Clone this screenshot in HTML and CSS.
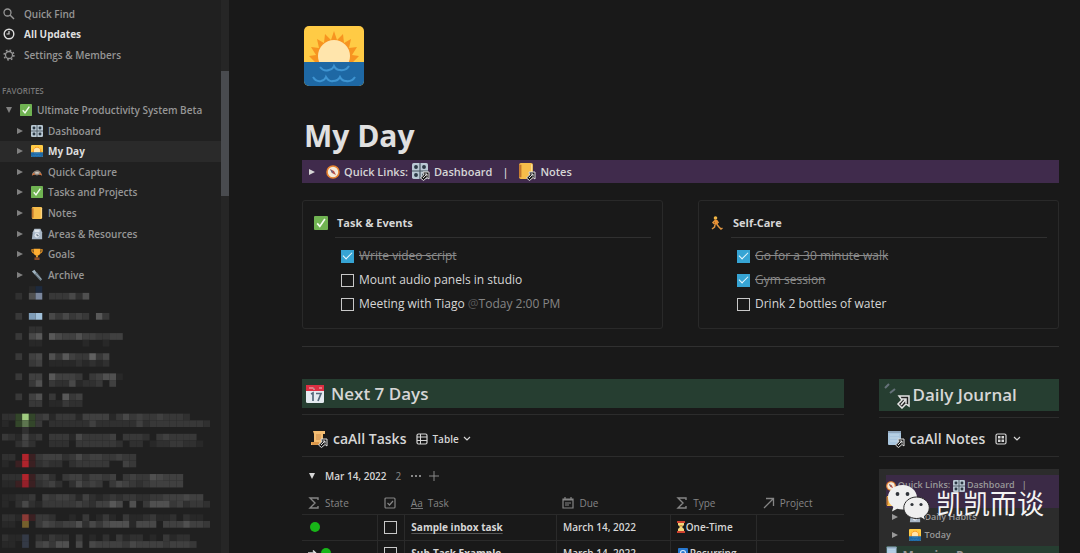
FILE: index.html
```
<!DOCTYPE html>
<html lang="en">
<head>
<meta charset="utf-8">
<title>My Day</title>
<link rel="stylesheet" href="styles.css">
</head>
<body>
<svg class="defs" aria-hidden="true">
  <symbol id="tri" viewBox="0 0 8 8"><path d="M1 1l6 3-6 3z" fill="currentColor"/></symbol>
  <symbol id="tri-down" viewBox="0 0 8 8"><path d="M1 1h6L4 7z" fill="currentColor"/></symbol>
  <symbol id="check" viewBox="0 0 14 14"><rect width="14" height="14" rx="1" fill="#70b352"/><path d="M3.2 7.4l2.6 3L10.900 3" fill="none" stroke="#f4fbef" stroke-width="1.700"/></symbol>
  <symbol id="knobs" viewBox="0 0 14 14"><rect width="14" height="14" rx="1.500" fill="#b9c8d3"/><path d="M7 0v14M0 7h14" stroke="#46545f" stroke-width="1"/><g fill="#2c3a45"><circle cx="3.500" cy="3.500" r="1.700"/><circle cx="10.500" cy="3.500" r="1.700"/><circle cx="3.500" cy="10.500" r="1.700"/><circle cx="10.500" cy="10.500" r="1.700"/></g></symbol>
  <symbol id="sun" viewBox="0 0 60 60"><rect width="60" height="60" rx="5" fill="#ffcb45"/><path d="M12 37L5 30l7-1-5-8 8 1-2-9 7 4 1-9 6 6 3-9 3 9 6-6 1 9 7-4-2 9 8-1-5 8 7 1-7 7z" fill="#f79420"/><circle cx="30" cy="30" r="16" fill="#ffe5ac"/><path d="M0 36h60v19a5 5 0 0 1-5 5H5a5 5 0 0 1-5-5z" fill="#1e68a4"/><path d="M16 41q4 5 9 3 4-1 5-4 2 4 6 4 6 1 9-4M9 51q3 5 8 4 4-1 5-4 3 5 7 4 5 0 7-4 2 4 6 4 6 1 9-4" fill="none" stroke="#3e94d1" stroke-width="2"/></symbol>
  <symbol id="capture" viewBox="0 0 14 14"><path d="M1 11c0-3 2-5 6-6 3 0 5 2 6 6l-3-1-3 1-3-1z" fill="#8f857c"/><path d="M1 11l2-3 2 2zM9 10l2-2 2 3z" fill="#d06a31"/><path d="M5 7h4v2H5z" fill="#cfc8bd"/></symbol>
  <symbol id="book" viewBox="0 0 14 14"><rect x="1" width="12" height="14" rx="1.500" fill="#f7bd4a"/><path d="M1 1.500h2v11H1z" fill="#c4772d"/><path d="M12 1v12" stroke="#fbe1a0"/></symbol>
  <symbol id="cabinet" viewBox="0 0 14 14"><path d="M2 5l2-4h7l2 4v8H1z" fill="#a9b7c6"/><path d="M4 2h6v3H4z" fill="#e0e5ea"/><circle cx="7" cy="8.500" r="2.800" fill="#dfe5ec"/><path d="M7 7v2h2" fill="none" stroke="#536373"/></symbol>
  <symbol id="trophy" viewBox="0 0 14 14"><path d="M3 1h8v5q-1 3-4 3T3 6zM6 8h2v3H6z" fill="#ffae32"/><path d="M3 2H1q0 4 3 4M11 2h2q0 4-3 4" fill="none" stroke="#f59b23" stroke-width="1.300"/><path d="M4 11h6v3H4z" fill="#8c4c2a"/></symbol>
  <symbol id="torch" viewBox="0 0 14 14"><path d="M1 3l3-2 3 4-2 2z" fill="#9fb2bf"/><path d="M4 6l3-2 6 8-2 2z" fill="#6d7e8a"/><path d="M6 6l6 6" stroke="#9eabb5"/></symbol>
  <symbol id="compass" viewBox="0 0 14 14"><circle cx="7" cy="7" r="6" fill="#f4ead9" stroke="#e8832f" stroke-width="1.600"/><path d="M4 4l4 2 2 4-4-2z" fill="#b54d45"/><path d="M4 4l2 4 1-1z" fill="#536e96"/></symbol>
  <symbol id="link" viewBox="0 0 10 10"><path d="M3 1h6v7L7 6.500 3.500 9.500.5 7l3-3z" fill="#1a1a1a" stroke="#ddd"/><path d="M3 7l4-4M4.500 3H7v2.500" fill="none" stroke="#ddd"/></symbol>
  <symbol id="scroll" viewBox="0 0 16 16"><path d="M3 1h12v3h-2v8q0 3-3 3H1v-3h3V4z" fill="#f3bd72"/><path d="M1 12h8v3H2z" fill="#dd9a4c"/><path d="M6 5h5M6 7h5M6 9h5" stroke="#c98a4c"/></symbol>
  <symbol id="pages" viewBox="0 0 16 16"><rect x="1" y="1" width="13" height="14" rx="1" fill="#a9c6df"/><path d="M1 2h13" stroke="#8fa5bb" stroke-width="2"/><path d="M3 5h9M3 8h9M3 11h9" stroke="#c3d8e8"/></symbol>
  <symbol id="sigma" viewBox="0 0 12 12"><path d="M10 3V1H2l5 5-5 5h8V9" fill="none" stroke="currentColor" stroke-width="1.400"/></symbol>
  <symbol id="box" viewBox="0 0 12 12"><rect x="1" y="1" width="10" height="10" rx="1" fill="none" stroke="currentColor" stroke-width="1.200"/><path d="M3.500 6l2 2 3.500-4" fill="none" stroke="currentColor" stroke-width="1.200"/></symbol>
  <symbol id="date" viewBox="0 0 12 12"><path d="M1 2h10v9H1zM1 3h10M3 0v2M9 0v2M3 6h6M3 8h4" fill="none" stroke="currentColor" stroke-width="1.200"/></symbol>
  <symbol id="arrow" viewBox="0 0 12 12"><path d="M1 11L10 2M3 1.500h7.500V9" fill="none" stroke="currentColor" stroke-width="1.300"/></symbol>
  <symbol id="chev" viewBox="0 0 8 8"><path d="M1 2l3 3 3-3" fill="none" stroke="currentColor" stroke-width="1.200"/></symbol>
  <symbol id="grid" viewBox="0 0 12 12"><rect x="1" y="1" width="10" height="10" rx="1.500" fill="none" stroke="currentColor" stroke-width="1.200"/><path d="M3 3h2.500v2.500H3zM6.500 3H9v2.500H6.500zM3 6.500h2.500V9H3zM6.500 6.500H9V9H6.500z" fill="currentColor"/></symbol>
</svg>

<div class="app">
  <aside class="sidebar">
    <div class="side-main">
      <nav class="top-nav">
        <a href="#" class="side-link"><svg class="i12" viewBox="0 0 12 12"><circle cx="4.500" cy="4.500" r="3.500" fill="none" stroke="currentColor" stroke-width="1.300"/><path d="M7 7l4 4" stroke="currentColor" stroke-width="1.500"/></svg>Quick Find</a>
        <a href="#" class="side-link bright"><svg class="i12" viewBox="0 0 12 12"><circle cx="6" cy="6" r="4.800" fill="none" stroke="currentColor" stroke-width="1.400"/><path d="M6 3v3H3.500" fill="none" stroke="currentColor" stroke-width="1.200"/></svg>All Updates</a>
        <a href="#" class="side-link"><svg class="i12" viewBox="0 0 12 12"><circle cx="6" cy="6" r="3.500" fill="none" stroke="currentColor" stroke-width="1.300"/><circle cx="6" cy="6" r="4.900" fill="none" stroke="currentColor" stroke-width="1.500" stroke-dasharray="1.700 2.150"/></svg>Settings &amp; Members</a>
      </nav>
      <h2 class="label">FAVORITES</h2>
      <nav class="tree">
        <a href="#" class="node root"><svg class="i8"><use href="#tri-down"/></svg><svg class="i12"><use href="#check"/></svg>Ultimate Productivity System Beta</a>
        <a href="#" class="node"><svg class="i8"><use href="#tri"/></svg><svg class="i12"><use href="#knobs"/></svg>Dashboard</a>
        <a href="#" class="node active"><svg class="i8"><use href="#tri"/></svg><svg class="i12"><use href="#sun"/></svg>My Day</a>
        <a href="#" class="node"><svg class="i8"><use href="#tri"/></svg><svg class="i12"><use href="#capture"/></svg>Quick Capture</a>
        <a href="#" class="node"><svg class="i8"><use href="#tri"/></svg><svg class="i12"><use href="#check"/></svg>Tasks and Projects</a>
        <a href="#" class="node"><svg class="i8"><use href="#tri"/></svg><svg class="i12"><use href="#book"/></svg>Notes</a>
        <a href="#" class="node"><svg class="i8"><use href="#tri"/></svg><svg class="i12"><use href="#cabinet"/></svg>Areas &amp; Resources</a>
        <a href="#" class="node"><svg class="i8"><use href="#tri"/></svg><svg class="i12"><use href="#trophy"/></svg>Goals</a>
        <a href="#" class="node"><svg class="i8"><use href="#tri"/></svg><svg class="i12"><use href="#torch"/></svg>Archive</a>
      </nav>
      <svg class="mosaic" id="mosaic" viewBox="0 0 31 39" aria-hidden="true"></svg>
    </div>
    <div class="track"><div class="thumb"></div></div>
  </aside>

  <main class="main">
    <svg class="cover-icon"><use href="#sun"/></svg>
    <h1 class="title">My Day</h1>
    <div class="quick">
      <svg class="i8"><use href="#tri"/></svg>
      <svg class="i14 lead"><use href="#compass"/></svg>
      <span>Quick Links:</span>
      <span class="linked"><svg class="i16"><use href="#knobs"/></svg><svg class="badge"><use href="#link"/></svg></span>
      <a href="#">Dashboard</a><span class="bar">|</span>
      <span class="linked"><svg class="i16"><use href="#book"/></svg><svg class="badge"><use href="#link"/></svg></span>
      <a href="#">Notes</a>
    </div>

    <div class="cards">
      <section class="card">
        <svg class="i14"><use href="#check"/></svg>
        <div class="card-body">
          <h2 class="card-title">Task &amp; Events</h2>
          <label class="todo done"><input type="checkbox" class="tick" checked><span>Write video script</span></label>
          <label class="todo"><input type="checkbox" class="tick"><span>Mount audio panels in studio</span></label>
          <label class="todo"><input type="checkbox" class="tick"><span>Meeting with Tiago <span class="mention"><span class="at">@</span>Today 2:00 PM</span></span></label>
        </div>
      </section>
      <section class="card">
        <svg class="i14" viewBox="0 0 14 14"><circle cx="5.500" cy="2" r="1.800" fill="#f0b545"/><path d="M4.500 3.500l3 .5.5 4.500-3.500.5z" fill="#ef8f2e"/><path d="M5 4.500L3 6.500l1.500 1.500M7 5l1.500 2M5 9l-.5 2-2.500 2M7 8.500l1.500 2L11 13l1.500-1" fill="none" stroke="#e09642" stroke-width="1.500"/></svg>
        <div class="card-body">
          <h2 class="card-title">Self-Care</h2>
          <label class="todo done"><input type="checkbox" class="tick" checked><span>Go for a 30 minute walk</span></label>
          <label class="todo done"><input type="checkbox" class="tick" checked><span>Gym session</span></label>
          <label class="todo"><input type="checkbox" class="tick"><span>Drink 2 bottles of water</span></label>
        </div>
      </section>
    </div>
    <hr class="rule">

    <div class="lower">
      <section class="tasks">
        <h2 class="banner"><svg class="i20" viewBox="0 0 20 20"><rect x="1" y="1" width="18" height="18" rx="1.500" fill="#e5ebf0"/><path d="M1 1h18v6H1z" fill="#dc2f42"/><path d="M4 4h1M6 3v2M8 3v2h2M14 4h3" stroke="#f5c0c4"/><path d="M6 10l2-1v8M11 9.500h5L13 17" fill="none" stroke="#55697b" stroke-width="1.700"/></svg>Next 7 Days</h2>
        <div class="view-head">
          <span class="linked"><svg class="i16"><use href="#scroll"/></svg><svg class="badge"><use href="#link"/></svg></span>
          <h3 class="view-title">caAll Tasks</h3>
          <button type="button" class="view-btn"><svg class="i12" viewBox="0 0 12 12"><rect x="1" y="1" width="10" height="10" rx="1.500" fill="none" stroke="currentColor" stroke-width="1.200"/><path d="M1 4h10M1 7.500h10M4.500 1v10" stroke="currentColor"/></svg>Table<svg class="i8"><use href="#chev"/></svg></button>
        </div>
        <div class="group"><svg class="i8"><use href="#tri-down"/></svg><span class="group-name">Mar 14, 2022</span><span>2</span><button type="button" class="mini" aria-label="More"><svg class="i12" viewBox="0 0 12 12"><path d="M1 6h2M5 6h2M9 6h2" stroke="currentColor" stroke-width="2"/></svg></button><button type="button" class="mini" aria-label="Add"><svg class="i12" viewBox="0 0 12 12"><path d="M6 1v10M1 6h10" stroke="currentColor"/></svg></button></div>
        <table class="table">
          <colgroup><col class="c-state"><col class="c-check"><col class="c-task"><col class="c-due"><col class="c-type"><col class="c-project"></colgroup>
          <thead><tr>
            <th><div class="cell"><svg class="i12"><use href="#sigma"/></svg>State</div></th>
            <th><div class="cell"><svg class="i12"><use href="#box"/></svg></div></th>
            <th><div class="cell"><span class="aa">Aa</span>Task</div></th>
            <th><div class="cell"><svg class="i12"><use href="#date"/></svg>Due</div></th>
            <th><div class="cell"><svg class="i12"><use href="#sigma"/></svg>Type</div></th>
            <th><div class="cell"><svg class="i12"><use href="#arrow"/></svg>Project</div></th>
          </tr></thead>
          <tbody>
            <tr>
              <td><div class="cell"><span class="dot"></span></div></td>
              <td><div class="cell"><input type="checkbox" class="tick" aria-label="Sample inbox task"></div></td>
              <td><a href="#" class="task">Sample inbox task</a></td>
              <td>March 14, 2022</td>
              <td><div class="cell tight"><svg class="glass" viewBox="0 0 8 12"><path d="M1 1h6v3L5 6l2 2v3H1V8l2-2-2-2z" fill="#f2d67c"/><path d="M0 1h8M0 11h8" stroke="#cf4230" stroke-width="2"/><path d="M2 4h4L4 6z" fill="#d89642"/></svg>One-Time</div></td>
              <td></td>
            </tr>
            <tr>
              <td><div class="cell tight"><svg class="i10" viewBox="0 0 12 12"><path d="M0 6h9M6 3l3 3-3 3" fill="none" stroke="#ddd" stroke-width="2"/></svg><span class="dot"></span></div></td>
              <td><div class="cell"><input type="checkbox" class="tick" aria-label="Sub-Task Example"></div></td>
              <td><a href="#" class="task">Sub-Task Example</a></td>
              <td>March 14, 2022</td>
              <td><div class="cell tight"><svg class="i12" viewBox="0 0 12 12"><rect x="1" y="1" width="10" height="10" rx="1" fill="#2878d0"/><path d="M3.500 8V6a2.500 2.500 0 0 1 5 0M8.500 8H5" fill="none" stroke="#d6e9fb" stroke-width="1.200"/></svg>Recurring</div></td>
              <td></td>
            </tr>
          </tbody>
        </table>
      </section>

      <section class="journal">
        <h2 class="banner tall"><svg class="journal-icon" viewBox="0 0 28 28"><path d="M3 7l4-4M8 12l5-4" stroke="#66727a" stroke-width="2"/><path d="M17 15h10v10l-3-2-4 4-4-4 4-4z" fill="#222" stroke="#e4e4e4" stroke-width="1.500"/><path d="M19 24l5-6M20 18h4v4" fill="none" stroke="#e4e4e4" stroke-width="1.500"/></svg>Daily Journal</h2>
        <div class="view-head">
          <span class="linked"><svg class="i16"><use href="#pages"/></svg><svg class="badge"><use href="#link"/></svg></span>
          <h3 class="view-title">caAll Notes</h3>
          <button type="button" class="view-btn" aria-label="Gallery view"><svg class="i12"><use href="#grid"/></svg><svg class="i8"><use href="#chev"/></svg></button>
        </div>
        <article class="preview">
          <p class="preview-links"><svg class="i10"><use href="#compass"/></svg> Quick Links: <svg class="i12"><use href="#knobs"/></svg> Dashboard &nbsp; |<br><svg class="i10"><use href="#book"/></svg> Notes</p>
          <p class="preview-row"><svg class="i8"><use href="#tri"/></svg><svg class="i12"><use href="#cabinet"/></svg>Daily Habits</p>
          <p class="preview-row"><svg class="i8"><use href="#tri"/></svg><svg class="i12"><use href="#sun"/></svg>Today</p>
          <h4 class="preview-banner"><svg class="i12"><use href="#pages"/></svg>Morning Pages</h4>
        </article>
      </section>
    </div>
  </main>
</div>

<div class="watermark">
  <svg class="bubbles" viewBox="0 0 42 36"><path d="M14.500 0C6.500 0 0 5.300 0 12.400c0 4 2 7.200 5.300 9.500L4 26.500l5.200-2.700q2.600.8 5.300.8C22.500 24.600 29 19 29 12.400S22.500 0 14.500 0z" fill="#efefef"/><circle cx="9.500" cy="9" r="1.900" fill="#30343a"/><circle cx="19.500" cy="9" r="1.900" fill="#30343a"/><path d="M28.500 12c-7 0-12.700 4.800-12.700 10.800s5.700 10.700 12.700 10.700q2.400 0 4.600-.7l4.500 2.600-1.200-4.200c3-2 4.900-5 4.900-8.400C41.300 16.800 35.500 12 28.500 12z" fill="#efefef" stroke="#292929"/><circle cx="24" cy="19.500" r="1.600" fill="#30343a"/><circle cx="33" cy="19.500" r="1.600" fill="#30343a"/></svg>
  <span lang="zh">凯凯而谈</span>
</div>
<script src="mosaic.js"></script>
</body>
</html>
```
FILE: styles.css
```
* { box-sizing: border-box; }

body {
  margin: 0;
  height: 100vh;
  overflow: hidden;
  background: #191919;
  color: #d6d6d6;
  font-family: "Open Sans", "Noto Sans", sans-serif;
  font-size: 11px;
  line-height: 16px;
}

a { color: inherit; text-decoration: none; }
h1, h2, h3, h4, p { margin: 0; }
svg { flex: none; display: block; }
button { font: inherit; color: inherit; background: none; border: 0; padding: 0; }

.defs { position: absolute; width: 0; height: 0; }
.i8 { width: 8px; height: 8px; }
.i10 { width: 10px; height: 10px; }
.i12 { width: 12px; height: 12px; }
.i14 { width: 14px; height: 14px; }
.i16 { width: 16px; height: 16px; }
.i20 { width: 20px; height: 20px; }

.app { display: flex; height: 100%; }

/* Sidebar */
.sidebar {
  display: flex;
  flex: none;
  width: 229px;
  background: #202020;
  color: #969696;
  font-size: 10px;
  font-weight: 600;
}
.side-main { flex: 1; min-width: 0; padding-top: 4px; }
.top-nav { display: grid; height: 61px; }
.side-link { display: flex; align-items: center; gap: 9px; padding-left: 3px; }
.bright, .node.active { color: #dedede; font-weight: 700; }
.label { margin-top: 18px; padding-left: 2px; font-size: 8px; font-weight: 600; color: #777; }
.tree { display: grid; height: 185px; margin-top: 1px; }
.node { display: flex; align-items: center; gap: 5px; padding-left: 16px; }
.node .i12 { margin-left: 2px; }
.node .i8 { color: #808080; }
.node.root { padding-left: 5px; }
.node.active { background: #2a2a2a; }
.mosaic { width: 208px; height: 262px; margin: 1px 0 0 2px; }
.track { width: 8px; background: #262626; padding-top: 71px; }
.thumb { height: 125px; background: #494b4f; }

/* Page */
.main { flex: 1; min-width: 0; padding: 26px 21px 0 73px; }
.cover-icon { width: 60px; height: 60px; margin-left: 2px; }
.title { margin: 30px 0 4px 2px; font-size: 30px; line-height: 40px; font-weight: 700; color: #e0e0e0; }
.quick {
  display: flex;
  align-items: center;
  gap: 4px;
  height: 23px;
  padding-left: 6px;
  background: #402b4c;
  font-weight: 600;
}
.lead { margin-left: 6px; }
.bar { margin: 0 6px; }
.linked { position: relative; flex: none; width: 18px; height: 18px; }
.badge { position: absolute; right: 0; bottom: 0; width: 10px; height: 10px; }

.cards { display: grid; grid-template-columns: 1fr 1fr; gap: 35px; margin-top: 17px; }
.card {
  display: flex;
  gap: 19px;
  padding: 15px 11px 12px;
  border: 1px solid #292929;
  border-radius: 3px;
}
.card { gap: 7px; }
.card-body { flex: 1; }
.card-title {
  padding: 0 0 7px 2px;
  margin-bottom: 6px;
  border-bottom: 1px solid #303030;
  font-size: 11px;
  line-height: 14px;
  font-weight: 700;
}
.todo { display: flex; align-items: center; gap: 5px; height: 24px; padding-left: 6px; font-size: 12px; }
.done { color: #8a8a8a; text-decoration: line-through; }
.mention { color: #858585; }
.at { color: #555; }
.tick {
  appearance: none;
  flex: none;
  width: 13px;
  height: 13px;
  margin: 0;
  border: 1px solid #c8c8c8;
}
.tick:checked {
  display: grid;
  place-items: center;
  background: #36a4d4;
  border-color: #36a4d4;
}
.tick:checked::after {
  content: "";
  width: 8px;
  height: 4px;
  border-left: 1px solid #eaf7fd;
  border-bottom: 1px solid #eaf7fd;
  rotate: -45deg;
  margin-bottom: 3px;
}
.rule { margin: 17px 0 32px; border: 0; border-top: 1px solid #303030; }

.lower { display: grid; grid-template-columns: 3fr 1fr; gap: 35px; }
.tasks, .journal { min-width: 0; }
.banner {
  display: flex;
  align-items: center;
  gap: 6px;
  height: 29px;
  padding-left: 3px;
  background: #263e31;
  font-size: 17px;
  font-weight: 600;
  white-space: nowrap;
}
.banner.tall { height: 32px; gap: 3px; }
.journal-icon { width: 28px; height: 28px; }
.view-head {
  display: flex;
  align-items: center;
  gap: 5px;
  height: 43px;
  margin-top: 6px;
  padding: 7px 0 0 8px;
  border-top: 1px solid #2c2c2c;
  border-bottom: 1px solid #2c2c2c;
}
.view-title { font-size: 14px; font-weight: 600; white-space: nowrap; }
.view-btn { display: flex; align-items: center; gap: 4px; margin-left: 5px; font-size: 10px; font-weight: 600; }
.journal .view-head { height: 40px; padding-top: 4px; }
.journal .view-btn { gap: 6px; }

.group { display: flex; align-items: center; gap: 9px; height: 36px; padding: 2px 0 0 6px; color: #888; font-size: 10px; }
.group .i8 { color: #d6d6d6; }
.group-name { color: #d6d6d6; font-weight: 600; }
.mini + .mini { margin-left: -3px; }

.table { width: 100%; border-collapse: collapse; table-layout: fixed; font-size: 10px; font-weight: 600; }
.table th { height: 21px; padding: 0 6px; color: #858585; font-weight: 500; text-align: left; }
.table td { height: 26px; padding: 0 6px; border: 1px solid #2a2a2a; white-space: nowrap; }
.table td:first-child { border-left: 0; }
.table td:last-child { border-right: 0; }
.c-state { width: 14%; }
.c-check { width: 5%; }
.c-task { width: 28%; }
.c-due { width: 21%; }
.c-type { width: 16%; }
.c-project { width: 16%; }
.cell { display: flex; align-items: center; gap: 5px; }
.cell.tight { gap: 1px; }
.aa { border-bottom: 1px solid #777; line-height: 10px; }
.dot { width: 10px; height: 10px; margin-left: 2px; border-radius: 50%; background: #18b518; }
.glass { width: 8px; height: 12px; }
.task { font-weight: 700; text-decoration: underline #555; text-underline-offset: 2px; }

.preview { margin-top: 12px; padding: 6px 0 0 7px; background: #2c2c2c; font-size: 9px; color: #999; white-space: nowrap; overflow: hidden; font-weight: 600; }
.preview svg { display: inline-block; vertical-align: middle; }
.preview-links { height: 33px; padding-top: 2px; background: #3b2a46; line-height: 15px; }
.preview-row { display: flex; align-items: center; gap: 4px; height: 18px; padding-left: 5px; }
.preview-row .i12 { margin-left: 6px; }
.preview-banner { display: flex; gap: 5px; margin-top: 2px; height: 28px; background: #263e31; font-size: 12px; line-height: 20px; }

.watermark {
  position: absolute;
  right: 36px;
  bottom: 30px;
  display: flex;
  align-items: center;
  gap: 6px;
  color: #f4f4f4;
  font-family: "Noto Sans CJK SC", sans-serif;
  font-size: 27px;
  line-height: 40px;
}
.bubbles { width: 42px; height: 36px; }
```
FILE: mosaic.js
```
// Redacted sidebar entries: one character per cell. Digits are grey levels, letters are tints.
const rows = [
  "....1b.........................",
  "..2.6s.333526..................",
  "...............................",
  "...............................",
  "..3.yY.535343.73...............",
  "...............................",
  "....22.........................",
  "..3.57.75446443344.............",
  "....11......1..1...............",
  "...............................",
  "..3.45.637433835...............",
  "....34.111121212...............",
  "...............................",
  "..3.44.74443.34661.............",
  "....36.32251223.4..............",
  "...............................",
  "..3.46.3.734...................",
  "....33.11322...................",
  "...............................",
  "22gGg34133314444135343343332...",
  "1.gHg3.222222422222242333333332",
  "...2...........................",
  "321523.3331533334.3332.343333..",
  "..242..222.3333332.22.12233221.",
  "...............................",
  "22.Rr344423534433433...........",
  "1.rRr2322.233333..43...........",
  "...............................",
  "222Rr342.34424434.343365444....",
  "11rQr2342.25343.35432344444....",
  "...............................",
  "11223.434431421232332233444544.",
  "1.2521333334324475.6.3666342332",
  "...............................",
  "221Or332..1.3.131.31123112.211.",
  "11.o.354344625356661555.4446443",
  "...............................",
  "211u.21322.3.1.2.3122.1.3122...",
  "11.u.45366.5.5444435444434443.."
];
const tints = {
  b: "#1d2a3e", s: "#7a869c", y: "#7f9db8", Y: "#a0c0da",
  g: "#33462a", G: "#a0cc80", H: "#5d764f",
  r: "#3b2022", R: "#b0242c", Q: "#94202a",
  O: "#8a3a36", o: "#75602c", u: "#343a46"
};
const ns = "http://www.w3.org/2000/svg";
const mosaic = document.getElementById("mosaic");
rows.forEach((row, y) => [...row].forEach((c, x) => {
  if (c === ".") return;
  const v = 32 + 8 * Number(c);
  const r = document.createElementNS(ns, "rect");
  r.setAttribute("x", x);
  r.setAttribute("y", y);
  r.setAttribute("width", 1);
  r.setAttribute("height", 1);
  r.setAttribute("fill", tints[c] || `rgb(${v},${v},${v})`);
  mosaic.append(r);
}));
```
